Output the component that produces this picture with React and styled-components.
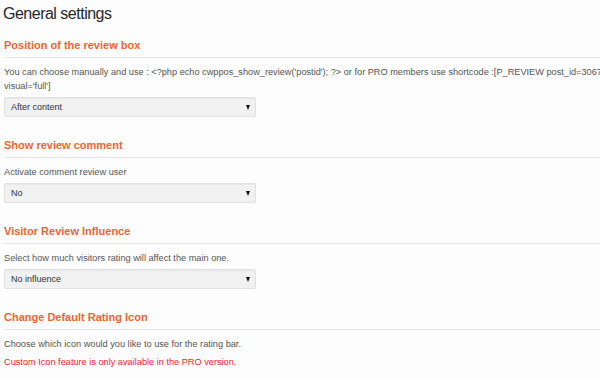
import React from 'react';
import styled, { createGlobalStyle } from 'styled-components';

const GlobalStyle = createGlobalStyle`
  html, body {
    margin: 0;
    padding: 0;
    background: #fdfdfd;
    overflow: hidden;
  }
  body {
    font-family: "Liberation Sans", Arial, sans-serif;
  }
`;

const Page = styled.div`
  width: 620px;
  padding: 3px 0 0 4px;
`;

const PageTitle = styled.h1`
  margin: 0 0 13px -1px;
  font-size: 16px;
  font-weight: 400;
  line-height: 22px;
  letter-spacing: -0.5px;
  color: #23282d;
`;

const Section = styled.section`
  & + & {
    margin-top: 21px;
  }
`;

const SectionTitle = styled.h3`
  margin: 0;
  font-size: 11px;
  font-weight: 700;
  line-height: 14px;
  color: #f0652f;
  padding-bottom: 5px;
  border-bottom: 1px solid #e6e6e6;
`;

const Description = styled.p`
  margin: 7px 0 0;
  font-size: 9.2px;
  line-height: 14px;
  color: #555;
`;

const Notice = styled.p`
  margin: 4px 0 0;
  font-size: 9.2px;
  line-height: 14px;
  color: #f0232f;
`;

const Select = styled.div`
  display: flex;
  align-items: center;
  justify-content: space-between;
  box-sizing: border-box;
  width: 252px;
  height: 20px;
  margin-top: 4px;
  padding: 0 5px 0 6px;
  background: #f1f1f1;
  border: 1px solid #e1e1e1;
  border-radius: 2px;
  box-shadow: inset 0 1px 1px rgba(0, 0, 0, 0.04);
  font-size: 9px;
  color: #333;
`;

const Caret = styled.span`
  width: 0;
  height: 0;
  border-left: 2.5px solid transparent;
  border-right: 2.5px solid transparent;
  border-top: 5px solid #111;
`;

const Dropdown = ({ value }) => (
  <Select>
    <span>{value}</span>
    <Caret />
  </Select>
);

export default function App() {
  return (
    <>
      <GlobalStyle />
      <Page>
        <PageTitle>General settings</PageTitle>

        <Section>
          <SectionTitle>Position of the review box</SectionTitle>
          <Description>
            You can choose manually and use : &lt;?php echo cwppos_show_review('postid'); ?&gt; or for PRO members use shortcode :[P_REVIEW post_id=3067 visual='full']
          </Description>
          <Dropdown value="After content" />
        </Section>

        <Section>
          <SectionTitle>Show review comment</SectionTitle>
          <Description>Activate comment review user</Description>
          <Dropdown value="No" />
        </Section>

        <Section>
          <SectionTitle>Visitor Review Influence</SectionTitle>
          <Description>Select how much visitors rating will affect the main one.</Description>
          <Dropdown value="No influence" />
        </Section>

        <Section>
          <SectionTitle>Change Default Rating Icon</SectionTitle>
          <Description>Choose which icon would you like to use for the rating bar.</Description>
          <Notice>Custom Icon feature is only available in the PRO version.</Notice>
        </Section>
      </Page>
    </>
  );
}
